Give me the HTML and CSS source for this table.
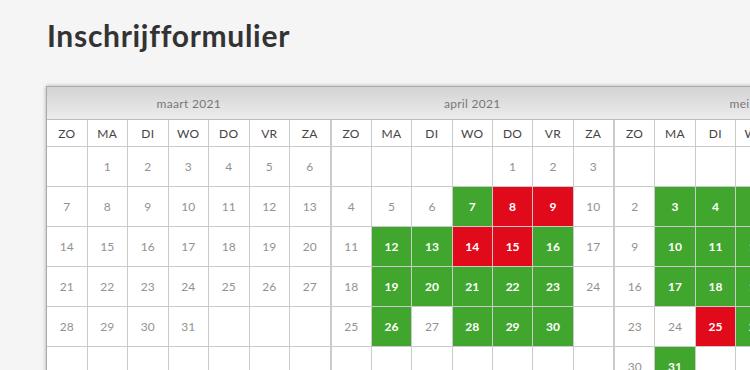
FILE: index.html
```html
<!DOCTYPE html>
<html lang="nl">
<head>
<meta charset="utf-8">
<title>Inschrijfformulier</title>
<link rel="stylesheet" href="styles.css">
</head>
<body>
<div class="page">
  <h1 class="title">Inschrijfformulier</h1>
  <div class="calendar">
    <div class="month">
      <div class="month-title">maart 2021</div>
      <div class="grid">
        <div class="dn">ZO</div><div class="dn">MA</div><div class="dn">DI</div><div class="dn">WO</div><div class="dn">DO</div><div class="dn">VR</div><div class="dn">ZA</div>
        <div class="d"></div><div class="d">1</div><div class="d">2</div><div class="d">3</div><div class="d">4</div><div class="d">5</div><div class="d">6</div>
        <div class="d">7</div><div class="d">8</div><div class="d">9</div><div class="d">10</div><div class="d">11</div><div class="d">12</div><div class="d">13</div>
        <div class="d">14</div><div class="d">15</div><div class="d">16</div><div class="d">17</div><div class="d">18</div><div class="d">19</div><div class="d">20</div>
        <div class="d">21</div><div class="d">22</div><div class="d">23</div><div class="d">24</div><div class="d">25</div><div class="d">26</div><div class="d">27</div>
        <div class="d">28</div><div class="d">29</div><div class="d">30</div><div class="d">31</div><div class="d"></div><div class="d"></div><div class="d"></div>
        <div class="d"></div><div class="d"></div><div class="d"></div><div class="d"></div><div class="d"></div><div class="d"></div><div class="d"></div>
      </div>
    </div>
    <div class="month">
      <div class="month-title">april 2021</div>
      <div class="grid">
        <div class="dn">ZO</div><div class="dn">MA</div><div class="dn">DI</div><div class="dn">WO</div><div class="dn">DO</div><div class="dn">VR</div><div class="dn">ZA</div>
        <div class="d"></div><div class="d"></div><div class="d"></div><div class="d"></div><div class="d">1</div><div class="d">2</div><div class="d">3</div>
        <div class="d">4</div><div class="d">5</div><div class="d">6</div><div class="d free">7</div><div class="d full">8</div><div class="d full">9</div><div class="d">10</div>
        <div class="d">11</div><div class="d free">12</div><div class="d free">13</div><div class="d full">14</div><div class="d full">15</div><div class="d free">16</div><div class="d">17</div>
        <div class="d">18</div><div class="d free">19</div><div class="d free">20</div><div class="d free">21</div><div class="d free">22</div><div class="d free">23</div><div class="d">24</div>
        <div class="d">25</div><div class="d free">26</div><div class="d">27</div><div class="d free">28</div><div class="d free">29</div><div class="d free">30</div><div class="d"></div>
        <div class="d"></div><div class="d"></div><div class="d"></div><div class="d"></div><div class="d"></div><div class="d"></div><div class="d"></div>
      </div>
    </div>
    <div class="month">
      <div class="month-title">mei 2021</div>
      <div class="grid">
        <div class="dn">ZO</div><div class="dn">MA</div><div class="dn">DI</div><div class="dn">WO</div><div class="dn">DO</div><div class="dn">VR</div><div class="dn">ZA</div>
        <div class="d"></div><div class="d"></div><div class="d"></div><div class="d"></div><div class="d"></div><div class="d"></div><div class="d">1</div>
        <div class="d">2</div><div class="d free">3</div><div class="d free">4</div><div class="d free">5</div><div class="d free">6</div><div class="d free">7</div><div class="d">8</div>
        <div class="d">9</div><div class="d free">10</div><div class="d free">11</div><div class="d free">12</div><div class="d free">13</div><div class="d free">14</div><div class="d">15</div>
        <div class="d">16</div><div class="d free">17</div><div class="d free">18</div><div class="d free">19</div><div class="d free">20</div><div class="d free">21</div><div class="d">22</div>
        <div class="d">23</div><div class="d">24</div><div class="d full">25</div><div class="d free">26</div><div class="d free">27</div><div class="d free">28</div><div class="d">29</div>
        <div class="d">30</div><div class="d free">31</div><div class="d"></div><div class="d"></div><div class="d"></div><div class="d"></div><div class="d"></div>
      </div>
    </div>
  </div>
</div>
</body>
</html>
```
FILE: styles.css
```css
html, body {
  margin: 0;
  padding: 0;
  background: #f5f5f5;
  overflow: hidden;
}
.page {
  padding: 17px 0 0 46px;
  font-family: Lato, "Open Sans", sans-serif;
}
.title {
  margin: 0 0 33px 1px;
  font-size: 30px;
  line-height: 36px;
  font-weight: 700;
  color: #333;
  letter-spacing: 0.7px;
}
.calendar {
  display: flex;
  width: max-content;
  border: 1px solid #a9a9a9;
  background: linear-gradient(#d3d3d3 0px, #ececec 32px, #fff 33px);
  box-shadow: 0 0 4px rgba(0, 0, 0, 0.3);
}
.month {
  width: 283.5px;
  flex: none;
}
.month-title {
  height: 32px;
  line-height: 34px;
  text-align: center;
  font-size: 12px;
  color: #777;
  border-bottom: 1px solid #bdbdbd;
  letter-spacing: 0.3px;
}
.grid {
  display: grid;
  grid-template-columns: repeat(7, 1fr);
  grid-auto-rows: 40px;
  grid-template-rows: 27px;
  background: #fff;
  border-left: 1px solid #ccc;
}
.month:first-child .grid {
  border-left: none;
}
.dn, .d {
  border-right: 1px solid #cacaca;
  border-bottom: 1px solid #cacaca;
  display: flex;
  align-items: center;
  justify-content: center;
  font-size: 12px;
}
.dn {
  color: #444;
  letter-spacing: 0.3px;
}
.d {
  color: #929292;
}
.d.free {
  background: #40a62e;
  color: #fff;
  font-weight: 700;
}
.d.full {
  background: #e10a1b;
  color: #fff;
  font-weight: 700;
}
```
